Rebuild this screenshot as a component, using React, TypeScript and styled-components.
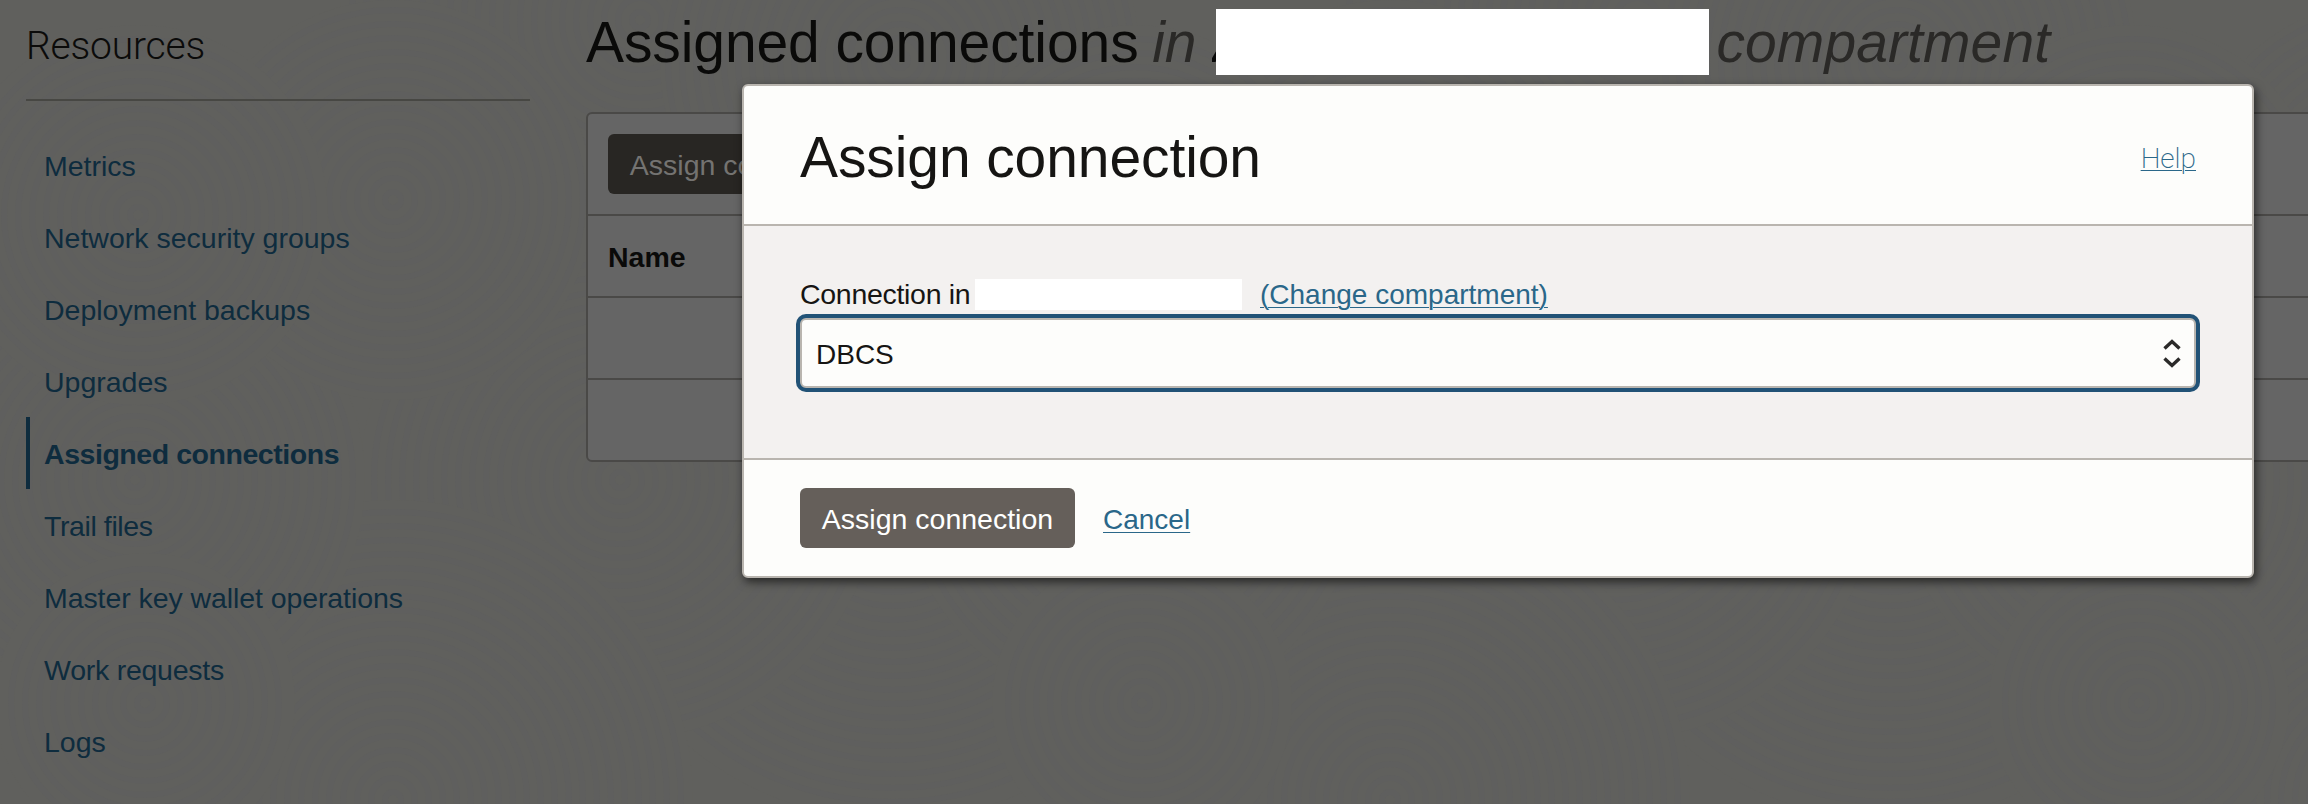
import React from "react";
import styled, { createGlobalStyle } from "styled-components";

const GlobalStyle = createGlobalStyle`
  *, *::before, *::after { box-sizing: border-box; }
  html, body { margin: 0; padding: 0; overflow: hidden; }
  body {
    background: #5f5f5d;
    font-family: "Liberation Sans", Arial, sans-serif;
    font-size: 28.5px;
    color: #161513;
  }
  h1, h2, h3, ul { margin: 0; padding: 0; font-weight: 400; }
  button { font: inherit; border: 0; margin: 0; }
`;

const Page = styled.div`
  position: relative;
  width: 2308px;
  height: 804px;
  overflow: hidden;
  background: #60605d;
`;

const Texture = styled.svg`
  position: absolute;
  inset: 0;
`;

const Layout = styled.div`
  position: relative;
  display: flex;
  align-items: flex-start;
  gap: 56px;
  padding-left: 26px;
`;

const Sidebar = styled.aside`
  flex: 0 0 504px;
`;

const SidebarTitle = styled.h3`
  height: 101px;
  padding-top: 23px;
  border-bottom: 2px solid #474743;
  font-family: Roboto, "Liberation Sans", sans-serif;
  font-weight: 300;
  font-size: 39px;
  line-height: 46px;
  letter-spacing: -0.2px;
  color: #0b0b0a;
`;

const NavList = styled.ul`
  list-style: none;
  padding-top: 28px;
`;

const NavItem = styled.li<{ $active?: boolean; $tracking?: number }>`
  display: flex;
  align-items: center;
  height: 72px;
  padding: 2px 0 0 14px;
  border-left: 4px solid ${(p) => (p.$active ? "#0e2c3e" : "transparent")};
  color: #0e2c3e;
  font-weight: ${(p) => (p.$active ? 700 : 400)};
  letter-spacing: ${(p) => p.$tracking ?? 0}px;
`;

const Main = styled.main`
  flex: 1 0 1800px;
`;

const PageTitle = styled.h1`
  display: flex;
  height: 112px;
  padding-top: 9px;
  font-size: 57px;
  line-height: 66px;
  letter-spacing: -0.1px;
  color: #0a0a09;
  white-space: pre;
`;

const Scope = styled.em`
  margin-left: -2px;
  color: #2a2927;
`;

const ScopeInitial = styled.em`
  width: 4px;
  margin-left: 16px;
  overflow: hidden;
`;

const Redacted = styled.span<{ $w: number; $h: number }>`
  flex: none;
  width: ${(p) => p.$w}px;
  height: ${(p) => p.$h}px;
  background: #fff;
`;

const ScopeSuffix = styled.em`
  margin-left: 7px;
  letter-spacing: 0.1px;
  color: #2a2927;
`;

const Table = styled.div`
  width: 1800px;
  border: 2px solid #4a4947;
  border-radius: 6px;
  background: #656565;
`;

const TableRow = styled.div<{ $h: number }>`
  display: flex;
  align-items: center;
  height: ${(p) => p.$h}px;
  padding-left: 20px;
  font-weight: 700;
  color: #0a0a09;
  & + & { border-top: 2px solid #4a4947; }
`;

const ColumnName = styled.span`
  padding-top: 2px;
`;

const Button = styled.button<{ $dimmed?: boolean }>`
  display: flex;
  align-items: center;
  justify-content: center;
  width: 275px;
  height: 60px;
  padding: 2px 0 0;
  border-radius: 6px;
  font-weight: 400;
  background: ${(p) => (p.$dimmed ? "#282623" : "#655f5a")};
  color: ${(p) => (p.$dimmed ? "#747371" : "#ffffff")};
`;

const Dialog = styled.section`
  position: absolute;
  left: 742px;
  top: 84px;
  width: 1512px;
  height: 494px;
  display: flex;
  flex-direction: column;
  border: 2px solid #b9b5af;
  border-radius: 6px;
  background: #fdfdfb;
  box-shadow: 2px 4px 10px rgba(0, 0, 0, 0.6);
  overflow: hidden;
`;

const DialogHeader = styled.header`
  display: flex;
  justify-content: space-between;
  align-items: center;
  height: 140px;
  padding: 3px 56px 0;
  border-bottom: 2px solid #b9b5af;
`;

const DialogTitle = styled.h2`
  font-size: 57px;
  line-height: 66px;
  letter-spacing: -0.1px;
`;

const Link = styled.a`
  font-size: 28px;
  color: #2a6789;
  text-decoration: underline;
  text-decoration-thickness: 1px;
  text-underline-offset: 3px;
`;

const HelpLink = styled(Link)`
  padding-top: 3px;
  font-family: Roboto, "Liberation Sans", sans-serif;
  font-weight: 200;
  text-underline-offset: 2px;
`;

const DialogBody = styled.div`
  height: 234px;
  padding: 53px 54px 0 52px;
  border-bottom: 2px solid #b9b5af;
  background: #f3f1f0;
`;

const FieldLabel = styled.div`
  display: flex;
  height: 39px;
  padding-left: 4px;
  line-height: 30px;
`;

const LabelText = styled.span`
  width: 175px;
  letter-spacing: -0.3px;
  white-space: nowrap;
`;

const ChangeLink = styled(Link)`
  margin-left: 18px;
  padding-top: 1px;
`;

const Select = styled.div`
  display: flex;
  align-items: center;
  justify-content: space-between;
  width: 1396px;
  height: 70px;
  margin-left: 4px;
  padding: 0 12px 0 14px;
  border: 2px solid #b9b5af;
  border-radius: 6px;
  background: #fdfdfb;
  box-shadow: 0 0 0 4px #215276;
  font-size: 28px;
`;

const SelectValue = styled.span`
  padding-top: 3px;
`;

const DialogFooter = styled.footer`
  display: flex;
  align-items: center;
  gap: 28px;
  flex: 1;
  padding-left: 56px;
`;

const CancelLink = styled(Link)`
  padding-top: 3px;
`;

const NAV: { label: string; tracking?: number; active?: boolean }[] = [
  { label: "Metrics" },
  { label: "Network security groups" },
  { label: "Deployment backups" },
  { label: "Upgrades" },
  { label: "Assigned connections", tracking: -0.45, active: true },
  { label: "Trail files", tracking: -0.4 },
  { label: "Master key wallet operations", tracking: -0.08 },
  { label: "Work requests", tracking: -0.25 },
  { label: "Logs" },
];

const TILE_WIDTH = 997;

const RIPPLES: [number, number, number][] = [
  [640, 20, 300],
  [893, 500, 320],
  [620, 480, 260],
  [900, 60, 240],
  [393, 800, 300],
  [135, 480, 230],
  [393, 200, 200],
  [138, 215, 190],
  [145, 703, 150],
];

function Ripples() {
  return (
    <Texture width="2308" height="804" viewBox="0 0 2308 804" aria-hidden="true">
      {[0, 1, 2].map((tile) => (
        <g key={tile} transform={`translate(${tile * TILE_WIDTH} 0)`}>
          {RIPPLES.map(([cx, cy, radius]) => (
            <g key={`${cx}-${cy}`}>
              <circle cx={cx} cy={cy} r={radius} fill="#60605d" />
              {Array.from({ length: Math.floor(radius / 14) }, (_, i) => (
                <circle
                  key={i}
                  cx={cx}
                  cy={cy}
                  r={8 + i * 14}
                  fill="none"
                  stroke="#5f5f5e"
                  strokeWidth="6"
                />
              ))}
            </g>
          ))}
        </g>
      ))}
    </Texture>
  );
}

function SelectArrows() {
  return (
    <svg width="20" height="32" viewBox="0 0 20 32" fill="none" stroke="#2b2a29" strokeWidth="3.4">
      <path d="M2.5 11.5 L10 4.5 L17.5 11.5" />
      <path d="M2.5 21.5 L10 28.5 L17.5 21.5" />
    </svg>
  );
}

export default function App() {
  return (
    <Page>
      <GlobalStyle />
      <Ripples />
      <Layout>
        <Sidebar>
          <SidebarTitle>Resources</SidebarTitle>
          <NavList>
            {NAV.map(({ label, tracking, active }) => (
              <NavItem key={label} $active={active} $tracking={tracking}>
                {label}
              </NavItem>
            ))}
          </NavList>
        </Sidebar>
        <Main>
          <PageTitle>
            Assigned connections <Scope>in</Scope>
            <ScopeInitial>A</ScopeInitial>
            <Redacted $w={493} $h={66} />
            <ScopeSuffix>compartment</ScopeSuffix>
          </PageTitle>
          <Table>
            <TableRow $h={100}>
              <Button $dimmed>Assign connection</Button>
            </TableRow>
            <TableRow $h={82}>
              <ColumnName>Name</ColumnName>
            </TableRow>
            <TableRow $h={82} />
            <TableRow $h={82} />
          </Table>
        </Main>
      </Layout>
      <Dialog role="dialog">
        <DialogHeader>
          <DialogTitle>Assign connection</DialogTitle>
          <HelpLink>Help</HelpLink>
        </DialogHeader>
        <DialogBody>
          <FieldLabel>
            <LabelText>Connection in</LabelText>
            <Redacted $w={267} $h={31} />
            <ChangeLink>(Change compartment)</ChangeLink>
          </FieldLabel>
          <Select>
            <SelectValue>DBCS</SelectValue>
            <SelectArrows />
          </Select>
        </DialogBody>
        <DialogFooter>
          <Button>Assign connection</Button>
          <CancelLink>Cancel</CancelLink>
        </DialogFooter>
      </Dialog>
    </Page>
  );
}
